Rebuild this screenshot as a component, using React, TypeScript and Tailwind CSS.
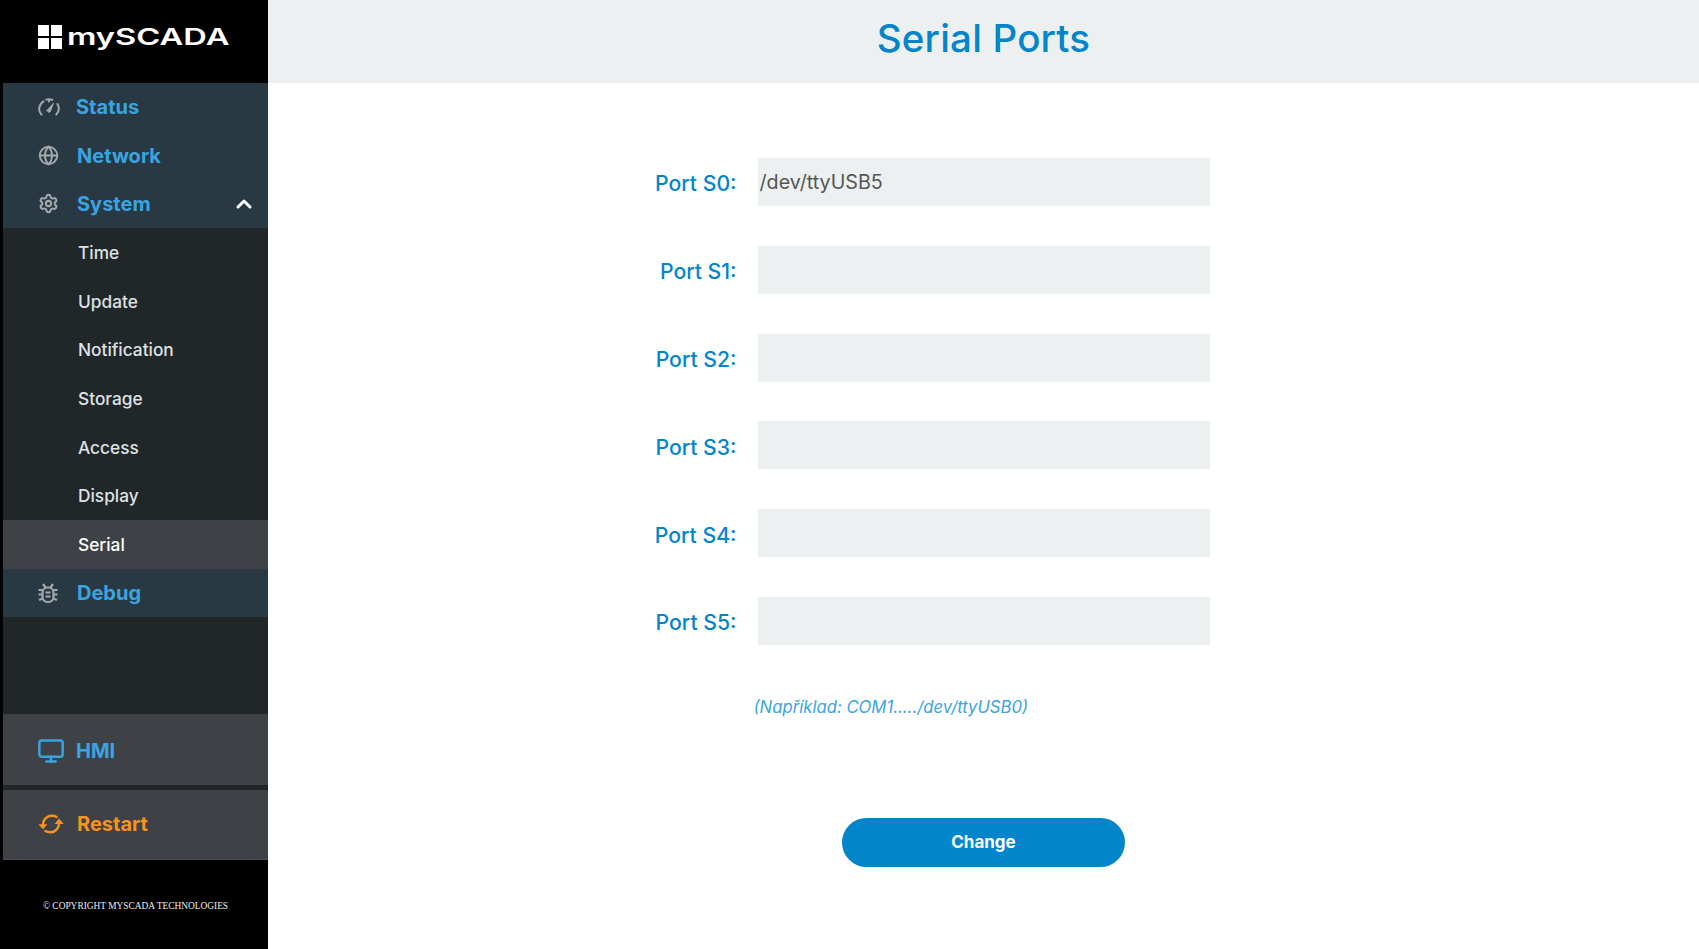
import React from "react";
import { ChevronUp, Globe, Monitor, Settings } from "lucide-react";

const font = "font-['Inter','Liberation_Sans',sans-serif]";

function Gauge() {
  return (
    <svg width="22" height="18" viewBox="0 0 22 18" fill="none" stroke="#a3a9ad" strokeWidth="2" strokeLinecap="round">
      <path d="M3.5 16.5C1.8 14.8 1 12.6 1.2 10.4C1.5 7.5 3 5 5.5 3.3" />
      <path d="M8.2 1.6C10.3 1 12.6 1.1 14.4 1.9" />
      <path d="M18.3 16.5C20.3 14.6 21.2 12 20.7 9.2C20.5 8 20 7 19.4 6" />
      <path d="M9 12.5L15.5 5.2L12.2 13.8C11.4 14.8 9.6 14.2 9 12.5Z" fill="#a3a9ad" strokeWidth="1" strokeLinejoin="round" />
      <path d="M11 1.4V3.4" />
    </svg>
  );
}

function Bug() {
  return (
    <svg width="20" height="21" viewBox="0 0 20 21" fill="none" stroke="#a3a9ad" strokeWidth="2.2">
      <rect x="4.5" y="4.5" width="11" height="14.5" rx="5" />
      <path d="M5 1L7.5 4.5M15 1L12.5 4.5M0.5 7H4.5M15.5 7H19.5M0.5 11.5H4.5M15.5 11.5H19.5M1 17L5 15.5M19 17L15 15.5" />
      <path d="M7.5 9.5H12.5M7.5 13.5H12.5" />
    </svg>
  );
}

function Sync() {
  return (
    <svg width="26" height="20" viewBox="0 0 26 20" fill="none">
      <path d="M5 11C4.8 6 8.5 2 13 1.8C15.5 1.7 17.5 2.2 18.6 3" stroke="#f7931e" strokeWidth="2.4" strokeLinecap="round" />
      <path d="M21 9C21.2 14 17.5 18 13 18.2C10.5 18.3 8.5 17.8 7.4 17" stroke="#f7931e" strokeWidth="2.4" strokeLinecap="round" />
      <path d="M0.3 10.2H9.4L5 15.3Z" fill="#f7931e" />
      <path d="M16.6 10H25.7L21 4.5Z" fill="#f7931e" />
    </svg>
  );
}

function MainRow({ icon, label, chevron, slot }: { icon: React.ReactNode; label: string; chevron?: boolean; slot?: string }) {
  return (
    <div className="flex h-[48.4px] items-center bg-[#293943] pl-[35px]">
      <span className={`flex justify-start ${slot ?? "w-[39px]"}`}>{icon}</span>
      <span className="text-[20px] leading-none font-bold text-[#3ba4e0]">{label}</span>
      {chevron && <ChevronUp className="ml-auto mr-[12px] text-white" size={24} strokeWidth={3} />}
    </div>
  );
}

function SubRow({ label, active }: { label: string; active?: boolean }) {
  return (
    <div className={`flex h-[48.7px] items-center pl-[75px] text-[17.3px] leading-none font-medium ${active ? "bg-[#3e4146] text-white" : "text-[#dfe2e4]"}`}>
      {label}
    </div>
  );
}

const ports = ["Port S0:", "Port S1:", "Port S2:", "Port S3:", "Port S4:", "Port S5:"];

export default function App() {
  return (
    <div className={`flex h-screen w-full overflow-hidden bg-white ${font}`}>
      <aside className="flex h-full w-[268px] shrink-0 flex-col border-l-[3px] border-black bg-[#212629]">
        <div className="flex h-[83px] shrink-0 items-center bg-black pl-[35px] pb-[9px]">
          <div className="grid h-[24px] w-[24px] grid-cols-2 gap-[2px]">
            <span className="bg-white" />
            <span className="bg-white" />
            <span className="bg-white" />
            <span className="bg-white" />
          </div>
          <span className="ml-[5px] origin-left scale-x-[1.42] text-[23px] leading-none font-semibold text-white">mySCADA</span>
        </div>
        <MainRow icon={<Gauge />} label="Status" slot="w-[38px]" />
        <MainRow icon={<Globe size={21} strokeWidth={2.2} color="#a3a9ad" />} label="Network" />
        <MainRow icon={<Settings size={21} strokeWidth={2.3} color="#a3a9ad" />} label="System" chevron />
        <SubRow label="Time" />
        <SubRow label="Update" />
        <SubRow label="Notification" />
        <SubRow label="Storage" />
        <SubRow label="Access" />
        <SubRow label="Display" />
        <SubRow label="Serial" active />
        <MainRow icon={<Bug />} label="Debug" />
        <div className="flex-1" />
        <div className="flex h-[71px] shrink-0 items-center bg-[#3e4146] pl-[35px] pt-[2px]">
          <span className="-ml-[1px] flex w-[39px] justify-start">
            <Monitor size={28} strokeWidth={2.1} color="#3ba4e0" />
          </span>
          <span className="text-[20px] leading-none font-bold text-[#3ba4e0]">HMI</span>
        </div>
        <div className="h-[5px] shrink-0" />
        <div className="flex h-[70px] shrink-0 items-center border-b border-[#4a4d52] bg-[#3e4146] pl-[35px] pb-[2px]">
          <span className="flex w-[39px] justify-start">
            <Sync />
          </span>
          <span className="text-[20px] leading-none font-bold text-[#f7931e]">Restart</span>
        </div>
        <div className="flex h-[89px] shrink-0 items-center justify-center bg-black pt-[3px] font-['Liberation_Serif',serif] text-[9.4px] text-[#ededed]">
          © COPYRIGHT MYSCADA TECHNOLOGIES
        </div>
      </aside>

      <main className="flex min-w-0 flex-1 flex-col">
        <header className="flex h-[83px] shrink-0 items-center justify-center bg-[#ecf0f1] pb-[6px]">
          <h1 className="text-[38.5px] leading-none font-medium tracking-[0.2px] text-[#0285cb]">Serial Ports</h1>
        </header>
        <div className="grid grid-cols-[1fr_452px_1fr] gap-y-[39.8px] pt-[75px]">
          {ports.map((p, i) => (
            <React.Fragment key={p}>
              <label className="flex items-center justify-end pt-[4px] pr-[21px] text-[21.2px] leading-none font-medium text-[#0285cb]">{p}</label>
              <input
                readOnly
                value={i === 0 ? "/dev/ttyUSB5" : ""}
                className="h-[48px] bg-[#ecf0f1] pl-[2px] text-[19.7px] text-[#555555] outline-none"
              />
              <div />
            </React.Fragment>
          ))}
        </div>
        <div className="grid grid-cols-[1fr_452px_1fr] pt-[51px]">
          <div />
          <p className="-ml-[4px] text-[16.7px] leading-[22px] italic text-[#3ba4e0]">(Například: COM1...../dev/ttyUSB0)</p>
          <div />
        </div>
        <button className="mx-auto mt-[100px] h-[49px] w-[283px] rounded-full bg-[#0285cb] text-[17px] font-bold text-white">Change</button>
      </main>
    </div>
  );
}
